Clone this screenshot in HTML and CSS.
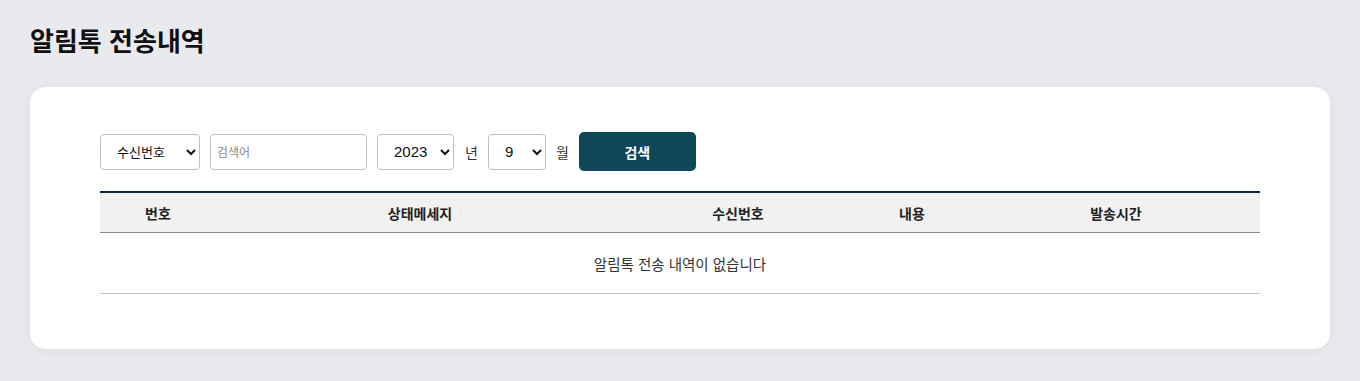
FILE: index.html
```html
<!DOCTYPE html>
<html lang="ko">
<head>
  <meta charset="UTF-8" />
  <meta name="viewport" content="width=device-width, initial-scale=1.0"/>
  <title>알림톡 전송내역</title>
  <link rel="stylesheet" href="styles.css">
</head>
<body>
  <div class="page">
    <h1>알림톡 전송내역</h1>

    <div class="card">
      <form class="search-bar" onsubmit="return false;">
        <select class="sel sel-type">
          <option>수신번호</option>
          <option>내용</option>
        </select>
        <input type="text" class="keyword" placeholder="검색어">
        <select class="sel sel-year">
          <option>2023</option>
          <option>2022</option>
        </select>
        <span class="unit unit-year">년</span>
        <select class="sel sel-month">
          <option>9</option>
          <option>10</option>
        </select>
        <span class="unit">월</span>
        <button type="submit" class="btn-search">검색</button>
      </form>

      <table class="list">
        <colgroup>
          <col class="c-no">
          <col class="c-status">
          <col class="c-phone">
          <col class="c-content">
          <col>
        </colgroup>
        <thead>
          <tr>
            <th>번호</th>
            <th>상태메세지</th>
            <th>수신번호</th>
            <th>내용</th>
            <th>발송시간</th>
          </tr>
        </thead>
        <tbody>
          <tr>
            <td colspan="5" class="empty">알림톡 전송 내역이 없습니다</td>
          </tr>
        </tbody>
      </table>
    </div>
  </div>
</body>
</html>
```

FILE: styles.css
```css
body {
  margin: 0;
  background-color: #e9eaee;
  font-family: "Noto Sans CJK KR", "Noto Sans", sans-serif;
  color: #222;
}

.page {
  padding: 23px 30px 32px;
}

h1 {
  margin: 0 0 30px;
  font-size: 26px;
  line-height: 34px;
  font-weight: 700;
  color: #111;
}

.card {
  background: #fff;
  border-radius: 16px;
  padding: 45px 70px 55px;
  box-shadow: 0 2px 14px rgba(0, 0, 0, 0.05);
}

.search-bar {
  display: flex;
  align-items: center;
  gap: 10px;
  margin-bottom: 20px;
}

.sel,
.keyword {
  height: 36px;
  box-sizing: border-box;
  border: 1px solid #bdbdbd;
  border-radius: 4px;
  background: #fff;
  font-family: "Noto Sans CJK KR", "Noto Sans", sans-serif;
  color: #111;
}

.sel {
  font-size: 13px;
  padding: 0 6px 0 12px;
}

.sel-type {
  width: 100px;
}

.sel-year {
  width: 77px;
  font-family: "Liberation Sans", sans-serif;
  font-size: 15px;
}

.sel-month {
  width: 58px;
  font-family: "Liberation Sans", sans-serif;
  font-size: 15px;
}

.keyword {
  width: 157px;
  padding: 0 6px;
  font-size: 12px;
}

.keyword::placeholder {
  color: #8a8a8a;
}

.unit {
  font-size: 14px;
  color: #333;
}

.unit-year {
  padding-left: 1px;
}

.btn-search {
  width: 117px;
  height: 39px;
  border: none;
  border-radius: 5px;
  background-color: #0f4658;
  color: #fff;
  font-family: "Noto Sans CJK KR", "Noto Sans", sans-serif;
  font-size: 14px;
  font-weight: 700;
  cursor: pointer;
}

.list {
  width: 100%;
  border-collapse: collapse;
  table-layout: fixed;
  border-top: 2px solid #0b2b38;
  font-size: 14px;
}

.c-no { width: 116px; }
.c-status { width: 408px; }
.c-phone { width: 228px; }
.c-content { width: 120px; }

.list th {
  height: 39px;
  padding: 0;
  background-color: #f1f1f1;
  border-bottom: 1px solid #8c8c8c;
  font-weight: 700;
  color: #222;
  text-align: center;
}

.list td {
  height: 60px;
  padding: 0;
  border-bottom: 1px solid #c4c4c4;
  text-align: center;
  color: #333;
}

.list td.empty {
  font-size: 14.5px;
}
```
